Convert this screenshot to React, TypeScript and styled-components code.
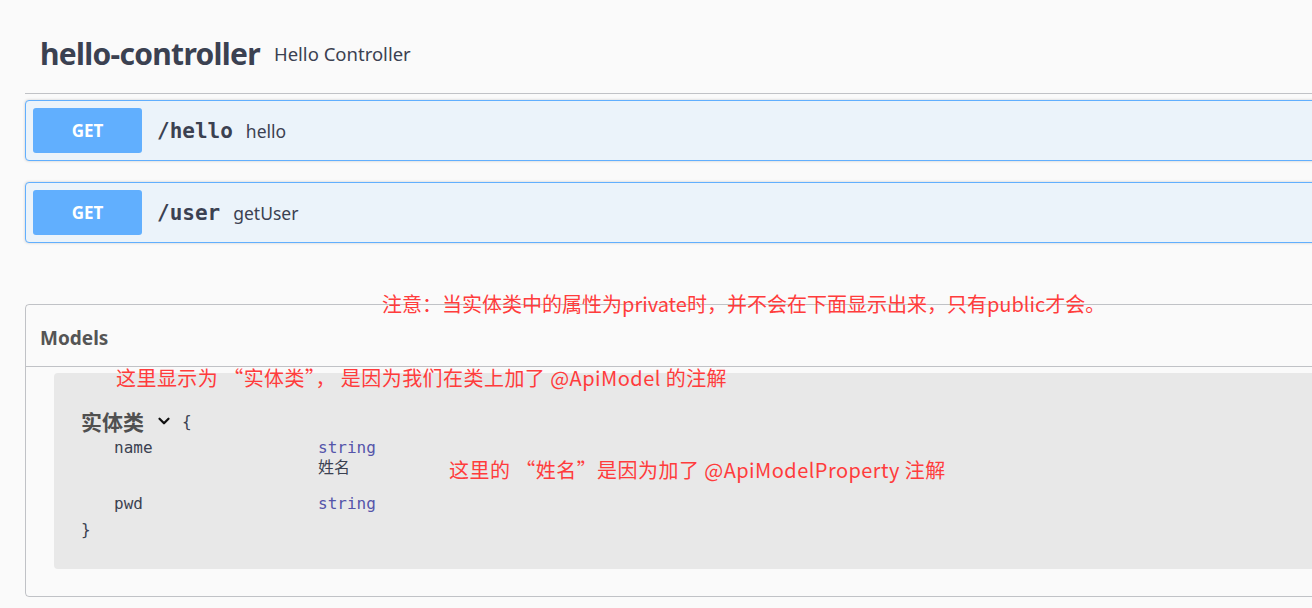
import React from "react";
import styled, { createGlobalStyle } from "styled-components";
import { ChevronDown } from "lucide-react";

const Global = createGlobalStyle`
  html, body { margin: 0; padding: 0; background: #fafafa; overflow: hidden; }
  body { font-family: "Noto Sans", "Noto Sans CJK SC", sans-serif; color: #3b4151; }
`;

const Page = styled.div`
  position: relative;
  width: 1320px;
  padding-left: 25px;
  height: 608px;
`;

const TagHeader = styled.div`
  display: flex;
  align-items: center;
  gap: 14px;
  height: 94px;
  box-sizing: border-box;
  padding: 36px 0 0 15px;
  border-bottom: 1px solid rgba(59, 65, 81, 0.3);
  align-content: flex-start;
`;

const TitleRow = styled.div`
  display: flex;
  align-items: center;
  gap: 14px;
  height: 36px;
  align-self: flex-start;
`;

const TagName = styled.h3`
  margin: 0;
  font-family: "Noto Sans", sans-serif;
  font-weight: 700;
  font-size: 30px;
  letter-spacing: -0.7px;
  color: #3b4151;
  line-height: 36px;
`;

const TagDesc = styled.span`
  font-size: 18.5px;
  line-height: 24px;
  color: #3b4151;
  margin-top: -1px;
`;

const OpList = styled.div`
  display: flex;
  flex-direction: column;
  gap: 21px;
  padding-top: 6px;
`;

const OpBlock = styled.div`
  display: flex;
  align-items: center;
  height: 61px;
  box-sizing: border-box;
  padding: 0 7px;
  border: 1px solid #61affe;
  border-radius: 4px;
  background: rgb(235, 243, 250);
  box-shadow: 0 0 3px rgba(0, 0, 0, 0.19);
`;

const Method = styled.span`
  display: flex;
  align-items: center;
  justify-content: center;
  width: 109px;
  height: 45px;
  border-radius: 3px;
  background: #61affe;
  color: #fff;
  font-weight: 700;
  font-size: 17px;
`;

const Path = styled.span`
  margin-left: 15px;
  font-family: "DejaVu Sans Mono", monospace;
  font-weight: 700;
  font-size: 21px;
  color: #3b4151;
`;

const Summary = styled.span`
  margin-left: 13px;
  font-size: 17.5px;
  color: #3b4151;
`;

const Models = styled.section`
  margin-top: 61px;
  height: 293px;
  box-sizing: border-box;
  border: 1px solid rgba(59, 65, 81, 0.3);
  border-radius: 4px;
`;

const ModelsHeader = styled.h4`
  margin: 0;
  height: 62px;
  box-sizing: border-box;
  display: flex;
  align-items: center;
  padding: 4px 0 0 14px;
  font-size: 19px;
  font-weight: 700;
  color: #555;
  border-bottom: 1px solid rgba(59, 65, 81, 0.3);
`;

const ModelBox = styled.div`
  margin: 6px 0 0 28px;
  height: 196px;
  box-sizing: border-box;
  padding: 35px 0 0 27px;
  background: #e8e8e8;
  border-radius: 4px;
`;

const ModelTitleRow = styled.div`
  display: flex;
  align-items: center;
  height: 26px;
`;

const ModelTitle = styled.span`
  font-family: "Noto Sans CJK SC", sans-serif;
  font-weight: 700;
  font-size: 21px;
  color: #505050;
`;

const Chevron = styled.span`
  display: flex;
  margin-left: 11px;
  color: #111;
`;

const Brace = styled.span`
  font-family: "DejaVu Sans Mono", monospace;
  font-size: 16px;
  color: #3b4151;
  margin-left: 9px;
  line-height: 19px;
`;

const Props = styled.div`
  display: flex;
  flex-direction: column;
  gap: 18px;
  padding: 4px 0 0 33px;
`;

const Prop = styled.div`
  display: grid;
  grid-template-columns: 204px 1fr;
  font-family: "DejaVu Sans Mono", monospace;
  font-size: 16px;
  line-height: 19px;
`;

const PropName = styled.span`
  color: #3b4151;
`;

const PropType = styled.div`
  display: flex;
  flex-direction: column;
  color: #55a;
`;

const PropDesc = styled.span`
  font-family: "Noto Sans CJK SC", sans-serif;
  font-size: 16px;
  color: #3b4151;
`;

const CloseBrace = styled(Brace)`
  display: block;
  margin: 7px 0 0;
`;

const Note = styled.div<{ $x: number; $y: number; $ls?: number }>`
  position: absolute;
  left: ${(p) => p.$x}px;
  top: ${(p) => p.$y}px;
  font-family: "Noto Sans CJK SC", sans-serif;
  font-size: 20px;
  line-height: 24px;
  letter-spacing: ${(p) => p.$ls ?? 0}px;
  color: #ff3c3c;
  white-space: pre;
`;

export default function App() {
  return (
    <>
      <Global />
      <Page>
        <TagHeader>
          <TitleRow>
            <TagName>hello-controller</TagName>
            <TagDesc>Hello Controller</TagDesc>
          </TitleRow>
        </TagHeader>
        <OpList>
          <OpBlock>
            <Method>GET</Method>
            <Path>/hello</Path>
            <Summary>hello</Summary>
          </OpBlock>
          <OpBlock>
            <Method>GET</Method>
            <Path>/user</Path>
            <Summary>getUser</Summary>
          </OpBlock>
        </OpList>
        <Models>
          <ModelsHeader>Models</ModelsHeader>
          <ModelBox>
            <ModelTitleRow>
              <ModelTitle>实体类</ModelTitle>
              <Chevron>
                <ChevronDown size={18} strokeWidth={3} />
              </Chevron>
              <Brace>{"{"}</Brace>
            </ModelTitleRow>
            <Props>
              <Prop>
                <PropName>name</PropName>
                <PropType>
                  <span>string</span>
                  <PropDesc>姓名</PropDesc>
                </PropType>
              </Prop>
              <Prop>
                <PropName>pwd</PropName>
                <PropType>
                  <span>string</span>
                </PropType>
              </Prop>
            </Props>
            <CloseBrace>{"}"}</CloseBrace>
          </ModelBox>
        </Models>
        <Note $x={382} $y={292}>
          注意：当实体类中的属性为private时，并不会在下面显示出来，只有public才会。
        </Note>
        <Note $x={116} $y={366} $ls={0.45}>
          这里显示为 “实体类”， 是因为我们在类上加了 @ApiModel 的注解
        </Note>
        <Note $x={449} $y={458} $ls={0.45}>
          这里的 “姓名”是因为加了 @ApiModelProperty 注解
        </Note>
      </Page>
    </>
  );
}
